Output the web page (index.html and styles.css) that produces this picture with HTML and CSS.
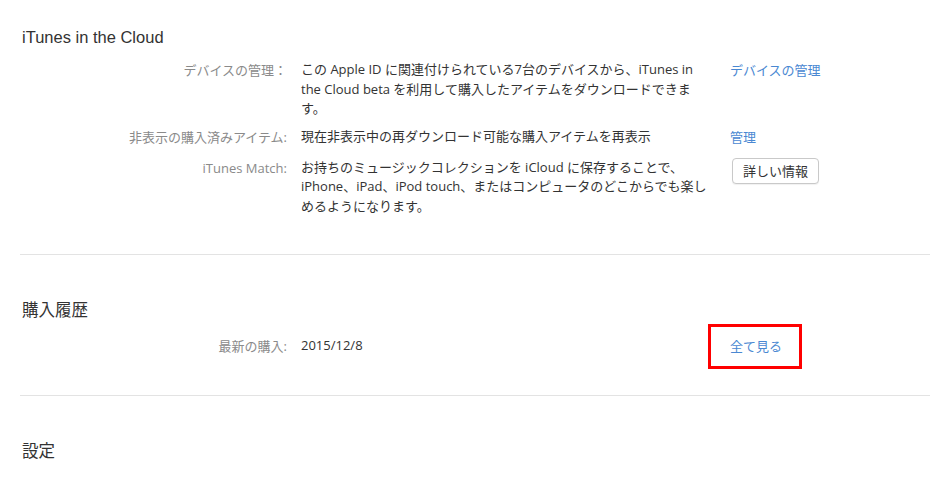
FILE: index.html
```html
<!DOCTYPE html>
<html lang="ja">
<head>
<meta charset="utf-8">
<title>iTunes in the Cloud</title>
<link rel="stylesheet" href="styles.css">
</head>
<body>
<div class="page">
  <section class="section first">
    <h2 class="section-title">iTunes in the Cloud</h2>
    <div class="rows">
      <div class="label">デバイスの管理：</div>
      <div class="value">この Apple ID に関連付けられている7台のデバイスから、iTunes in<br>the Cloud beta を利用して購入したアイテムをダウンロードできま<br>す。</div>
      <div class="action"><a class="link" href="#">デバイスの管理</a></div>

      <div class="label">非表示の購入済みアイテム:</div>
      <div class="value">現在非表示中の再ダウンロード可能な購入アイテムを再表示</div>
      <div class="action"><a class="link" href="#">管理</a></div>

      <div class="label match">iTunes Match:</div>
      <div class="value match">お持ちのミュージックコレクションを iCloud に保存することで、<br>iPhone、iPad、iPod touch、またはコンピュータのどこからでも楽し<br>めるようになります。</div>
      <div class="action match"><button class="btn" type="button">詳しい情報</button></div>
    </div>
  </section>

  <section class="section second">
    <h2 class="section-title">購入履歴</h2>
    <div class="rows single">
      <div class="label">最新の購入:</div>
      <div class="value">2015/12/8</div>
      <div class="action"><a class="link highlighted" href="#">全て見る</a></div>
    </div>
  </section>

  <section class="section last">
    <h2 class="section-title">設定</h2>
  </section>
</div>
</body>
</html>
```

FILE: styles.css
```css
html, body {
  margin: 0;
  padding: 0;
  background: #ffffff;
}

body {
  font-family: "Open Sans", "Noto Sans CJK JP", sans-serif;
  color: #333333;
}

.page {
  width: 910px;
  margin-left: 20px;
}

.section {
  padding: 45px 0 38px;
  border-bottom: 1px solid #e3e3e3;
}

.section.first {
  padding-top: 27px;
}

.section.second {
  padding-bottom: 39px;
}

.section.last {
  border-bottom: none;
  padding-bottom: 0;
}

.section-title {
  margin: 0;
  padding-left: 2px;
  font-family: "Liberation Sans", "Noto Sans CJK JP", sans-serif;
  font-size: 16.5px;
  font-weight: normal;
  line-height: 20px;
  color: #333333;
}

.rows {
  display: grid;
  grid-template-columns: 267px 415px auto;
  column-gap: 14px;
  row-gap: 8px;
  margin-top: 13px;
  font-size: 13px;
  line-height: 20px;
}

.rows.single {
  margin-top: 16px;
}

.label {
  text-align: right;
  font-size: 13px;
  color: #8a8a8a;
  white-space: nowrap;
}

.value {
  color: #333333;
  line-height: 19.5px;
  white-space: nowrap;
}

.match {
  margin-top: 3px;
}

.link {
  color: #4a88d2;
  text-decoration: none;
}

.highlighted {
  position: relative;
}

.highlighted::after {
  content: "";
  position: absolute;
  left: -22px;
  right: -20px;
  top: -13px;
  bottom: -14px;
  border: 3px solid #ff0000;
}

.btn {
  display: block;
  margin: 0 0 0 2px;
  width: 87px;
  height: 26px;
  padding: 0;
  border: 1px solid #c9c9c9;
  border-radius: 4px;
  background: #ffffff;
  font-family: "Noto Sans CJK JP", sans-serif;
  font-size: 13px;
  color: #333333;
  box-shadow: 0 1px 1px rgba(0, 0, 0, 0.06);
}
```
